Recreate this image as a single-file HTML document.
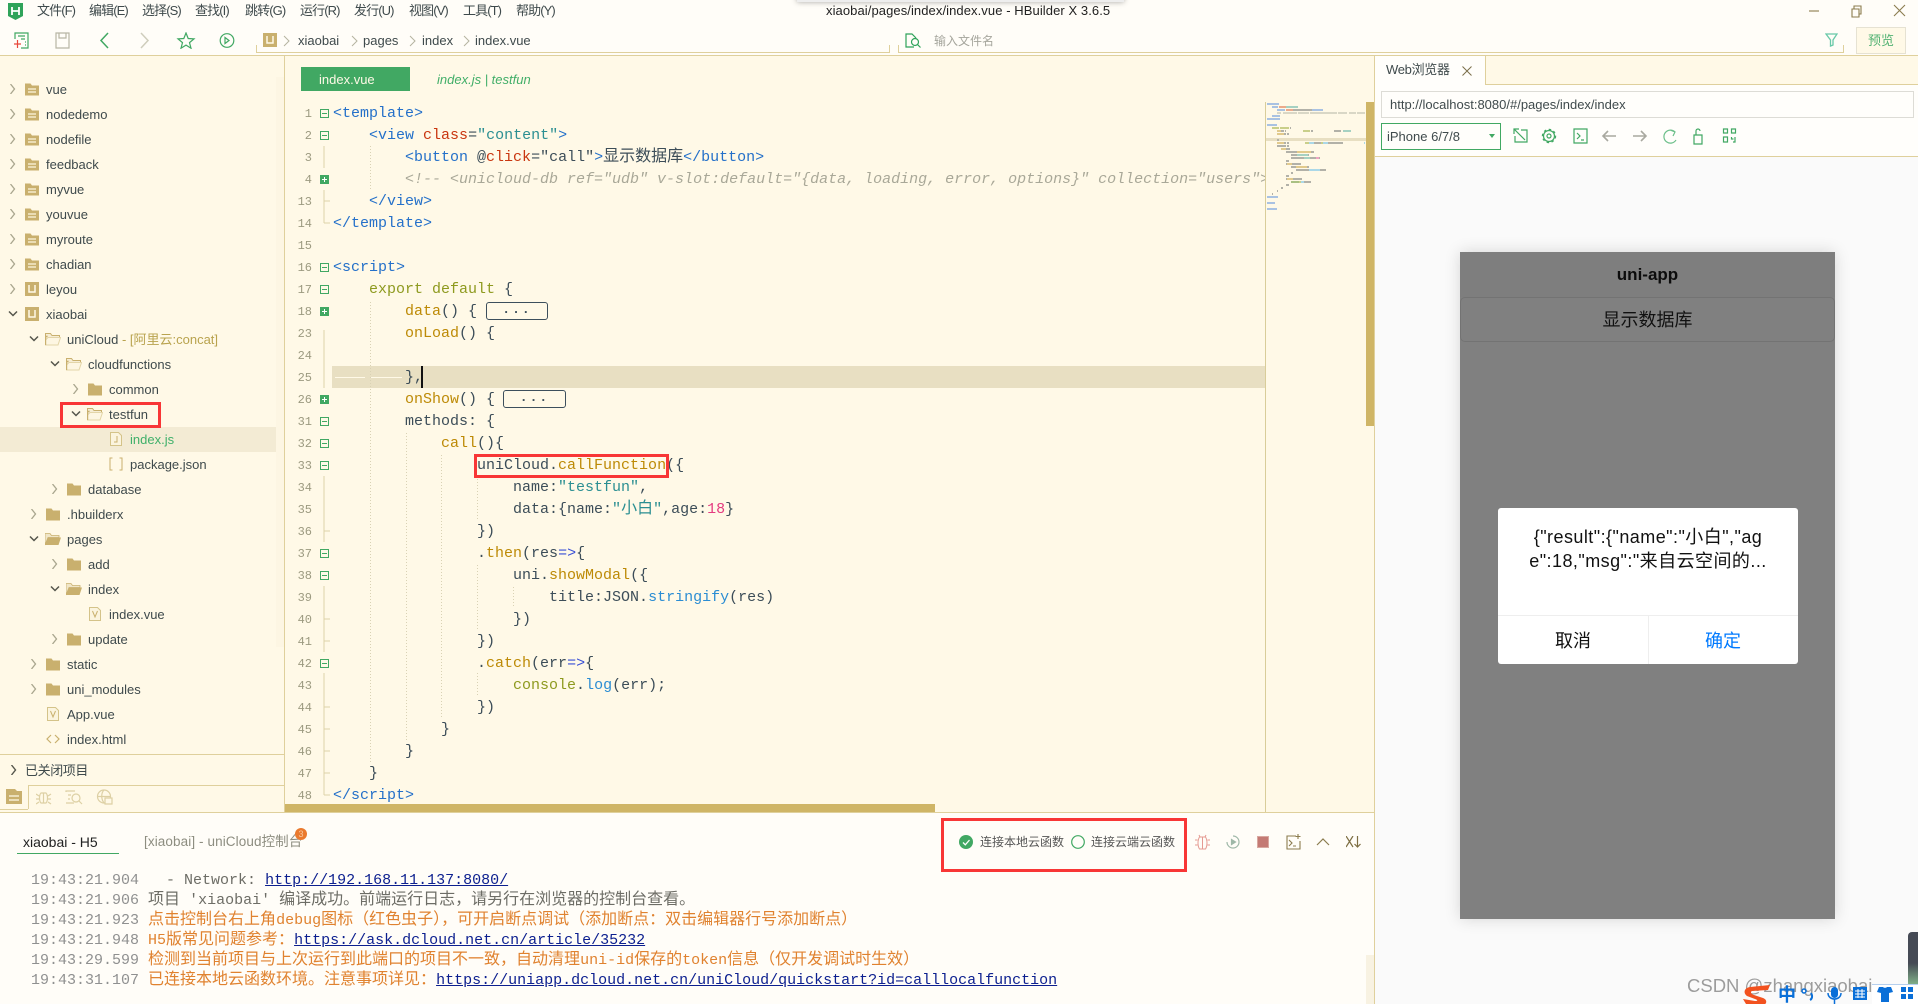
<!DOCTYPE html>
<html lang="zh"><head><meta charset="utf-8"><title>HBuilder X</title>
<style>
*{box-sizing:border-box}
html,body{margin:0;padding:0;width:1918px;height:1004px;overflow:hidden;background:#fffdf8;font:13px "Liberation Sans","Noto Sans CJK SC",sans-serif;color:#3f4a4c}
body{position:relative}
.a{position:absolute}
.tx{position:absolute;white-space:nowrap;line-height:18px}
.mn{letter-spacing:-.9px}
.bar{position:absolute;background:#dfd09c}
.r{position:absolute;left:0;width:276px;height:25px;line-height:26px;white-space:nowrap}
.r svg{position:absolute}
.r span{position:absolute;top:0}
.ch{top:7px;fill:none;stroke:#a9a68e;stroke-width:1.3}
.dn{top:8px;fill:none;stroke:#55564c;stroke-width:1.5}
.ic{top:5px}
#code{position:absolute;left:333px;top:103px;width:932px;height:704px;overflow:hidden;font:15px/22px "Liberation Mono","Noto Sans CJK SC",monospace;color:#3c4d58}
#code div{height:22px;white-space:pre}
.c{font:16px/0 "Noto Sans CJK SC",sans-serif}
.t{color:#2470c9}.at{color:#c9360f}.s{color:#2b8f92}.k{color:#8e9a1f}.f{color:#bd8a06}.cm{color:#a9a898;font-style:italic}.n{color:#e43b80}.b{color:#2b8dd3}.o{color:#3a50d6}
#nums{position:absolute;left:285px;top:103px;width:27px;text-align:right;font:12px/22px "Liberation Mono",monospace;color:#9c9a80}
#nums div{height:22px}
.fold{position:absolute;height:18px;border:1px solid #3d4f5c;border-radius:3px;font:bold 13px/13px "Liberation Mono",monospace;text-align:center;letter-spacing:2px;color:#3d4f5c}
#con{position:absolute;left:31px;top:871px;font:15px/20px "Liberation Mono","Noto Sans CJK SC",monospace;color:#6d6d66}
#con div{height:20px;white-space:pre}
#con .c{font:16px/0 "Noto Sans CJK SC",sans-serif}
.tm{color:#8f9090}.or{color:#e0822f}
#con a{color:#0c1f8f;text-decoration:underline}
.redb{position:absolute;border:3px solid #f83636}
</style></head>
<body>
<svg width="0" height="0" style="position:absolute">
<defs>
<symbol id="fp" viewBox="0 0 14 14"><path d="M0 1.5h5.500l1.500 2h7v10H0z" fill="#c9b06e"/><path d="M3 7h8M3 10h8" stroke="#fff6df" stroke-width="1.300"/></symbol>
<symbol id="fc" viewBox="0 0 14 14"><path d="M0 1.500h5.500l1.500 2h7v10H0z" fill="#c9b06e"/></symbol>
<symbol id="fo" viewBox="0 0 16 14"><path d="M.5 13V1.500h5l1.500 2h7.500V6" fill="#f6edd4" stroke="#c9b06e"/><path d="M.5 13V8L3 5.500h12.500L13 13z" fill="#fdf6e2" stroke="#e3d5a8"/><path d="M.5 13V5l2-1" fill="none" stroke="#c9b06e" stroke-width="1.400"/></symbol>
<symbol id="fl" viewBox="0 0 16 14"><path d="M0 13V1.500h5l1.500 2H14V5.500H3L0 13z" fill="#f0e6c8" stroke="#c9b06e" stroke-width=".8"/><path d="M0 13 3 5.500h13L13.500 13z" fill="#c9b06e"/></symbol>
<symbol id="u" viewBox="0 0 14 14"><rect width="14" height="14" fill="#c9b06e"/><path d="M4 3v7h6V3" fill="none" stroke="#fff9e7" stroke-width="1.500"/></symbol>
<symbol id="fv" viewBox="0 0 12 14"><path d="M.5.500h8l3 3v10H.5z" fill="#fbf4de" stroke="#d4c389"/><path d="M3.500 4l2.500 6 2.500-6" fill="none" stroke="#c9b06e"/></symbol>
<symbol id="m" viewBox="0 0 9 9"><rect x=".5" y=".5" width="8" height="8" fill="#fff9e7" stroke="#41a863"/><path d="M2 4.500h5" stroke="#41a863"/></symbol>
<symbol id="p" viewBox="0 0 9 9"><rect width="9" height="9" fill="#41a863"/><path d="M2 4.500h5M4.500 2v5" stroke="#fff"/></symbol>
</defs>
</svg>

<!-- title bar -->
<div class="a" style="left:797px;top:-8px;width:327px;height:10px;box-shadow:0 0 6px rgba(0,0,0,.35);background:#eee"></div>
<svg class="a" style="left:8px;top:3px" width="15" height="17" viewBox="0 0 15 17"><path d="M0 0h15v13l-7.500 4L0 13z" fill="#2fa35a"/><path d="M4 4v8M11 4v8M4 8h7" stroke="#fff" stroke-width="1.800" fill="none"/></svg>
<span class="tx mn" style="left:37px;top:2px">文件(F)</span><span class="tx mn" style="left:89px;top:2px">编辑(E)</span><span class="tx mn" style="left:142px;top:2px">选择(S)</span><span class="tx mn" style="left:195px;top:2px">查找(I)</span><span class="tx mn" style="left:245px;top:2px">跳转(G)</span><span class="tx mn" style="left:300px;top:2px">运行(R)</span><span class="tx mn" style="left:354px;top:2px">发行(U)</span><span class="tx mn" style="left:409px;top:2px">视图(V)</span><span class="tx mn" style="left:463px;top:2px">工具(T)</span><span class="tx mn" style="left:516px;top:2px">帮助(Y)</span>
<span class="tx" style="left:826px;top:2px;color:#222;letter-spacing:.08px">xiaobai/pages/index/index.vue - HBuilder X 3.6.5</span>
<svg class="a" style="left:1805px;top:3px" width="105" height="16" fill="none" stroke="#8b7c4e" stroke-width="1.100"><path d="M4 8h10"/><path d="M47 6h7v8h-7zM49 6V3h7v8h-2"/><path d="M89 2l11 11M100 2L89 13"/></svg>

<!-- toolbar -->
<svg class="a" style="left:14px;top:32px" width="240" height="17" fill="none" stroke-width="1.200">
<path d="M1 7V1h13v15H7" stroke="#41a863"/><path d="M4 4h7M7 7h4M11 10h1M11 13h1" stroke="#41a863"/><path d="M0 12h7M3.500 8v8" stroke="#e8473a"/>
<path d="M42 1h13v15H42zM45 1v5h7V1" stroke="#b8b6a4"/>
<path d="M94 1l-7 7.500 7 7.500" stroke="#41a863" stroke-width="1.500"/>
<path d="M127 1l7 7.500-7 7.500" stroke="#cfcdbc" stroke-width="1.500"/>
<path d="M172 1l2.200 5.500 5.800.400-4.500 3.700 1.500 5.600-5-3.100-5 3.100 1.500-5.600-4.500-3.700 5.800-.400z" stroke="#41a863"/>
<circle cx="213" cy="8.500" r="6.800" stroke="#41a863"/><path d="M211 5.500l4 3-4 3z" stroke="#41a863"/>
</svg>
<svg class="a" style="left:263px;top:33px" width="14" height="14"><use href="#u"/></svg>
<svg class="a" style="left:282px;top:35px" width="240" height="12" fill="none" stroke="#b5b3a0"><path d="M2 1l5 5-5 5M70 1l5 5-5 5M128 1l5 5-5 5M182 1l5 5-5 5"/></svg>
<span class="tx" style="left:298px;top:32px">xiaobai</span><span class="tx" style="left:363px;top:32px">pages</span><span class="tx" style="left:422px;top:32px">index</span><span class="tx" style="left:475px;top:32px">index.vue</span>
<div class="bar" style="left:256px;top:52px;width:634px;height:1px"></div>
<div class="bar" style="left:256px;top:45px;width:1px;height:8px"></div>
<div class="bar" style="left:889px;top:45px;width:1px;height:8px"></div>
<div class="bar" style="left:898px;top:52px;width:946px;height:1px"></div>
<div class="bar" style="left:898px;top:45px;width:1px;height:8px"></div>
<div class="bar" style="left:1843px;top:45px;width:1px;height:8px"></div>
<svg class="a" style="left:905px;top:33px" width="17" height="15" fill="none" stroke="#2fa35a" stroke-width="1.200"><path d="M9 14H1V1h6l4 4"/><circle cx="10" cy="9" r="3.500"/><path d="M12.500 11.500l3 3"/></svg>
<span class="tx" style="left:934px;top:32px;color:#a5a59c;font-size:12px">输入文件名</span>
<svg class="a" style="left:1825px;top:33px" width="13" height="14"><path d="M1 1h11L8 7v5L5.500 13V7z" fill="none" stroke="#68c9a8" stroke-width="1.300"/></svg>
<div class="a" style="left:1856px;top:27px;width:50px;height:27px;border:1px solid #e6e2d2;background:#fff9e7;color:#52b272;text-align:center;line-height:26px;font-size:13px">预览</div>
<div class="bar" style="left:0;top:55px;width:1918px;height:1px"></div>

<!-- sidebar -->
<div class="a" style="left:0;top:56px;width:285px;height:756px;background:#fff9e7"></div>
<div class="a" style="left:276px;top:77px;width:9px;height:570px;background:#fdf6e3"></div>
<div class="a" style="left:0;top:427px;width:276px;height:25px;background:#f3ebd4"></div>
<div class="r" style="top:77px"><svg class="ch" style="left:9px" width="8" height="10"><path d="M1.500 0l4 5-4 5"/></svg><svg class="ic" style="left:25px" width="14" height="14"><use href="#fp"/></svg><span style="left:46px">vue</span></div>
<div class="r" style="top:102px"><svg class="ch" style="left:9px" width="8" height="10"><path d="M1.500 0l4 5-4 5"/></svg><svg class="ic" style="left:25px" width="14" height="14"><use href="#fp"/></svg><span style="left:46px">nodedemo</span></div>
<div class="r" style="top:127px"><svg class="ch" style="left:9px" width="8" height="10"><path d="M1.500 0l4 5-4 5"/></svg><svg class="ic" style="left:25px" width="14" height="14"><use href="#fp"/></svg><span style="left:46px">nodefile</span></div>
<div class="r" style="top:152px"><svg class="ch" style="left:9px" width="8" height="10"><path d="M1.500 0l4 5-4 5"/></svg><svg class="ic" style="left:25px" width="14" height="14"><use href="#fp"/></svg><span style="left:46px">feedback</span></div>
<div class="r" style="top:177px"><svg class="ch" style="left:9px" width="8" height="10"><path d="M1.500 0l4 5-4 5"/></svg><svg class="ic" style="left:25px" width="14" height="14"><use href="#fp"/></svg><span style="left:46px">myvue</span></div>
<div class="r" style="top:202px"><svg class="ch" style="left:9px" width="8" height="10"><path d="M1.500 0l4 5-4 5"/></svg><svg class="ic" style="left:25px" width="14" height="14"><use href="#fp"/></svg><span style="left:46px">youvue</span></div>
<div class="r" style="top:227px"><svg class="ch" style="left:9px" width="8" height="10"><path d="M1.500 0l4 5-4 5"/></svg><svg class="ic" style="left:25px" width="14" height="14"><use href="#fp"/></svg><span style="left:46px">myroute</span></div>
<div class="r" style="top:252px"><svg class="ch" style="left:9px" width="8" height="10"><path d="M1.500 0l4 5-4 5"/></svg><svg class="ic" style="left:25px" width="14" height="14"><use href="#fp"/></svg><span style="left:46px">chadian</span></div>
<div class="r" style="top:277px"><svg class="ch" style="left:9px" width="8" height="10"><path d="M1.500 0l4 5-4 5"/></svg><svg class="ic" style="left:25px" width="14" height="14"><use href="#u"/></svg><span style="left:46px">leyou</span></div>
<div class="r" style="top:302px"><svg class="dn" style="left:8px" width="10" height="8"><path d="M1 1.500l4 4 4-4"/></svg><svg class="ic" style="left:25px" width="14" height="14"><use href="#u"/></svg><span style="left:46px">xiaobai</span></div>
<div class="r" style="top:327px"><svg class="dn" style="left:29px" width="10" height="8"><path d="M1 1.500l4 4 4-4"/></svg><svg class="ic" style="left:45px" width="16" height="14"><use href="#fo"/></svg><span style="left:67px">uniCloud<b style="font-weight:400;color:#b9a34e"> - [阿里云:concat]</b></span></div>
<div class="r" style="top:352px"><svg class="dn" style="left:50px" width="10" height="8"><path d="M1 1.500l4 4 4-4"/></svg><svg class="ic" style="left:66px" width="16" height="14"><use href="#fo"/></svg><span style="left:88px">cloudfunctions</span></div>
<div class="r" style="top:377px"><svg class="ch" style="left:72px" width="8" height="10"><path d="M1.500 0l4 5-4 5"/></svg><svg class="ic" style="left:88px" width="14" height="14"><use href="#fc"/></svg><span style="left:109px">common</span></div>
<div class="r" style="top:402px"><svg class="dn" style="left:71px" width="10" height="8"><path d="M1 1.500l4 4 4-4"/></svg><svg class="ic" style="left:87px" width="16" height="14"><use href="#fo"/></svg><span style="left:109px">testfun</span></div>
<div class="r" style="top:427px"><svg class="ic" style="left:110px" width="12" height="14"><path d="M.5.500h8l3 3v10H.5z" fill="#fbf4de" stroke="#d4c389"/><path d="M7 4v6H4" fill="none" stroke="#c9b06e"/></svg><span style="left:130px;color:#3fb06a">index.js</span></div>
<div class="r" style="top:452px"><svg class="ic" style="left:109px" width="14" height="14" fill="none" stroke="#c9b06e"><path d="M3.500 1H1v12h2.500M10.500 1H13v12h-2.500"/></svg><span style="left:130px">package.json</span></div>
<div class="r" style="top:477px"><svg class="ch" style="left:51px" width="8" height="10"><path d="M1.500 0l4 5-4 5"/></svg><svg class="ic" style="left:67px" width="14" height="14"><use href="#fc"/></svg><span style="left:88px">database</span></div>
<div class="r" style="top:502px"><svg class="ch" style="left:30px" width="8" height="10"><path d="M1.500 0l4 5-4 5"/></svg><svg class="ic" style="left:46px" width="14" height="14"><use href="#fc"/></svg><span style="left:67px">.hbuilderx</span></div>
<div class="r" style="top:527px"><svg class="dn" style="left:29px" width="10" height="8"><path d="M1 1.500l4 4 4-4"/></svg><svg class="ic" style="left:45px" width="16" height="14"><use href="#fl"/></svg><span style="left:67px">pages</span></div>
<div class="r" style="top:552px"><svg class="ch" style="left:51px" width="8" height="10"><path d="M1.500 0l4 5-4 5"/></svg><svg class="ic" style="left:67px" width="14" height="14"><use href="#fc"/></svg><span style="left:88px">add</span></div>
<div class="r" style="top:577px"><svg class="dn" style="left:50px" width="10" height="8"><path d="M1 1.500l4 4 4-4"/></svg><svg class="ic" style="left:66px" width="16" height="14"><use href="#fl"/></svg><span style="left:88px">index</span></div>
<div class="r" style="top:602px"><svg class="ic" style="left:89px" width="12" height="14"><use href="#fv"/></svg><span style="left:109px">index.vue</span></div>
<div class="r" style="top:627px"><svg class="ch" style="left:51px" width="8" height="10"><path d="M1.500 0l4 5-4 5"/></svg><svg class="ic" style="left:67px" width="14" height="14"><use href="#fc"/></svg><span style="left:88px">update</span></div>
<div class="r" style="top:652px"><svg class="ch" style="left:30px" width="8" height="10"><path d="M1.500 0l4 5-4 5"/></svg><svg class="ic" style="left:46px" width="14" height="14"><use href="#fc"/></svg><span style="left:67px">static</span></div>
<div class="r" style="top:677px"><svg class="ch" style="left:30px" width="8" height="10"><path d="M1.500 0l4 5-4 5"/></svg><svg class="ic" style="left:46px" width="14" height="14"><use href="#fc"/></svg><span style="left:67px">uni_modules</span></div>
<div class="r" style="top:702px"><svg class="ic" style="left:47px" width="12" height="14"><use href="#fv"/></svg><span style="left:67px">App.vue</span></div>
<div class="r" style="top:727px"><svg class="ic" style="left:46px" width="14" height="14" fill="none" stroke="#c9b06e" stroke-width="1.200"><path d="M5 3L1 7l4 4M9 3l4 4-4 4"/></svg><span style="left:67px">index.html</span></div>
<div class="bar" style="left:0;top:754px;width:285px;height:1px"></div>
<svg class="a" style="left:10px;top:765px" width="8" height="10" fill="none" stroke="#55564c" stroke-width="1.400"><path d="M1.500 0l4 5-4 5"/></svg>
<span class="tx" style="left:25px;top:762px;letter-spacing:-.4px">已关闭项目</span>
<div class="bar" style="left:29px;top:785px;width:256px;height:1px"></div>
<div class="bar" style="left:28px;top:785px;width:1px;height:24px"></div>
<div class="bar" style="left:0;top:809px;width:28px;height:1px"></div>
<svg class="a" style="left:6px;top:789px" width="16" height="15"><path d="M0 0h9l2 2h5v13H0z" fill="#c9b06e"/><path d="M3 7h10M3 11h10" stroke="#fff9e7" stroke-width="1.300"/></svg>
<svg class="a" style="left:36px;top:789px" width="80" height="16" fill="none" stroke="#ddd0a4" stroke-width="1.200"><path d="M5 4h5c2 2 2 8 0 10H5c-2-2-2-8 0-10zM7.500 4v10M0 5l3 2M15 5l-3 2M0 10h3M15 10h-3M0 15l3-2M15 15l-3-2"/><path d="M39 2h-9v1M32 6h3M32 10h2M30 14h8"/><circle cx="40" cy="9" r="4"/><path d="M43 12l3 3"/><circle cx="68" cy="7.500" r="6.500"/><path d="M68 1c-3 3-3 9 0 13M62 7.500h12"/><path d="M69 9h7v6h-7z" fill="#fff9e7"/></svg>

<!-- editor -->
<div class="a" style="left:284px;top:55px;width:1px;height:757px;background:#dfd09c"></div>
<div class="a" style="left:285px;top:56px;width:1089px;height:756px;background:#fff9e7"></div>
<div class="a" style="left:301px;top:67px;width:109px;height:24px;background:#41a863;color:#fdf8e6;line-height:25px;padding-left:18px">index.vue</div>
<span class="tx" style="left:437px;top:71px;color:#41ae68;font-style:italic">index.js | testfun</span>
<div class="a" style="left:332px;top:366px;width:933px;height:22px;background:#e8dfc2"></div>
<div class="a" style="left:335px;top:377px;width:30px;height:1px;background:#fff9e7"></div>
<div class="a" style="left:371px;top:377px;width:31px;height:1px;background:#fff9e7"></div>

<svg class="a" style="left:0;top:0" width="1918" height="1004" fill="none">
<g stroke="#ddd2a8">
<path d="M324 146V168M324 190V223M324 201h6M324 223h6M324 330V388M324 476V542M324 531h6M324 586V652M324 619h6M324 641h6M324 673V795M324 707h6M324 729h6M324 751h6M324 773h6M324 795h6"/>
</g>
<g stroke="#d9d2b4" stroke-dasharray="1 2">
<path d="M370.500 146V190M370.500 302V762M406.500 433V740M441.500 455V718M477.500 476V520M477.500 565V630M477.500 673V695M513.500 587V607"/>
</g>
<use href="#m" x="320" y="109" width="9" height="9"/><use href="#m" x="320" y="131" width="9" height="9"/><use href="#m" x="320" y="263" width="9" height="9"/><use href="#m" x="320" y="285" width="9" height="9"/><use href="#m" x="320" y="417" width="9" height="9"/><use href="#m" x="320" y="439" width="9" height="9"/><use href="#m" x="320" y="461" width="9" height="9"/><use href="#m" x="320" y="549" width="9" height="9"/><use href="#m" x="320" y="571" width="9" height="9"/><use href="#m" x="320" y="659" width="9" height="9"/>
<use href="#p" x="320" y="175" width="9" height="9"/><use href="#p" x="320" y="307" width="9" height="9"/><use href="#p" x="320" y="395" width="9" height="9"/>
</svg>

<div id="nums"><div>1</div><div>2</div><div>3</div><div>4</div><div>13</div><div>14</div><div>15</div><div>16</div><div>17</div><div>18</div><div>23</div><div>24</div><div>25</div><div>26</div><div>31</div><div>32</div><div>33</div><div>34</div><div>35</div><div>36</div><div>37</div><div>38</div><div>39</div><div>40</div><div>41</div><div>42</div><div>43</div><div>44</div><div>45</div><div>46</div><div>47</div><div>48</div></div>

<div id="code">
<div><span class="t">&lt;template&gt;</span></div>
<div>    <span class="t">&lt;view</span> <span class="at">class</span>=<span class="s">"content"</span><span class="t">&gt;</span></div>
<div>        <span class="t">&lt;button</span> @<span class="at">click</span>="call"<span class="t">&gt;</span><span class="c">显示数据库</span><span class="t">&lt;/button&gt;</span></div>
<div>        <span class="cm">&lt;!-- &lt;unicloud-db ref="udb" v-slot:default="{data, loading, error, options}" collection="users"&gt;</span></div>
<div>    <span class="t">&lt;/view&gt;</span></div>
<div><span class="t">&lt;/template&gt;</span></div>
<div> </div>
<div><span class="t">&lt;script&gt;</span></div>
<div>    <span class="k">export default</span> {</div>
<div>        <span class="f">data</span>() {</div>
<div>        <span class="f">onLoad</span>() {</div>
<div> </div>
<div>        },</div>
<div>        <span class="f">onShow</span>() {</div>
<div>        methods: {</div>
<div>            <span class="f">call</span>(){</div>
<div>                uniCloud.<span class="f">callFunction</span>({</div>
<div>                    name:<span class="s">"testfun"</span>,</div>
<div>                    data:{name:<span class="s">"<span class="c">小白</span>"</span>,age:<span class="n">18</span>}</div>
<div>                })</div>
<div>                .<span class="f">then</span>(res<span class="o">=&gt;</span>{</div>
<div>                    uni.<span class="f">showModal</span>({</div>
<div>                        title:JSON.<span class="b">stringify</span>(res)</div>
<div>                    })</div>
<div>                })</div>
<div>                .<span class="f">catch</span>(err<span class="o">=&gt;</span>{</div>
<div>                    <span class="k">console</span>.<span class="b">log</span>(err);</div>
<div>                })</div>
<div>            }</div>
<div>        }</div>
<div>    }</div>
<div><span class="t">&lt;/script&gt;</span></div>
</div>
<div class="fold" style="left:486px;top:302px;width:62px">...</div>
<div class="fold" style="left:503px;top:390px;width:63px">...</div>
<div class="a" style="left:421px;top:366px;width:2px;height:22px;background:#111"></div>
<div class="redb" style="left:60px;top:402px;width:101px;height:26px"></div>
<div class="redb" style="left:474px;top:454px;width:195px;height:24px"></div>

<!-- minimap -->
<div class="a" style="left:1265px;top:102px;width:1px;height:710px;background:#d9cd99"></div>
<svg class="a" style="left:1262px;top:95px" width="115" height="125" viewBox="0 0 345 375">
<rect x="12" y="129" width="300" height="9" fill="#e8dfc2"/>
<g fill="#a9c2e2"><rect x="15" y="24" width="36" height="6"/><rect x="30" y="33" width="18" height="6"/><rect x="45" y="42" width="24" height="6"/><rect x="150" y="42" width="33" height="6"/><rect x="30" y="60" width="24" height="6"/><rect x="15" y="69" width="39" height="6"/><rect x="15" y="87" width="30" height="6"/><rect x="15" y="303" width="33" height="6"/><rect x="15" y="321" width="24" height="6"/><rect x="15" y="339" width="30" height="6"/></g>
<g fill="#eda98a"><rect x="51" y="33" width="21" height="6"/><rect x="72" y="42" width="21" height="6"/></g>
<g fill="#a6d1c2"><rect x="72" y="33" width="36" height="6"/><rect x="243" y="105" width="24" height="6"/><rect x="105" y="177" width="33" height="6"/><rect x="126" y="186" width="18" height="6"/></g>
<g fill="#d9d7c6"><rect x="45" y="51" width="12" height="6"/><rect x="63" y="51" width="42" height="6"/><rect x="108" y="51" width="33" height="6"/><rect x="144" y="51" width="81" height="6"/><rect x="228" y="51" width="27" height="6"/><rect x="261" y="51" width="21" height="6"/><rect x="285" y="51" width="24" height="6"/></g>
<g fill="#c9cf8a"><rect x="30" y="96" width="21" height="6"/><rect x="54" y="96" width="27" height="6"/><rect x="123" y="105" width="21" height="6"/><rect x="129" y="141" width="12" height="6"/><rect x="177" y="141" width="6" height="6"/><rect x="111" y="258" width="6" height="6"/></g>
<g fill="#b2b1a8"><rect x="93" y="42" width="27" height="6"/><rect x="120" y="42" width="30" height="6"/><rect x="84" y="96" width="3" height="6"/><rect x="57" y="105" width="9" height="6"/><rect x="69" y="105" width="3" height="6"/><rect x="147" y="105" width="6" height="6"/><rect x="216" y="105" width="21" height="6"/><rect x="66" y="114" width="6" height="6"/><rect x="75" y="114" width="6" height="6"/><rect x="45" y="132" width="6" height="6"/><rect x="66" y="141" width="6" height="6"/><rect x="75" y="141" width="6" height="6"/><rect x="156" y="141" width="21" height="6"/><rect x="198" y="141" width="45" height="6"/><rect x="45" y="150" width="27" height="6"/><rect x="75" y="150" width="6" height="6"/><rect x="72" y="159" width="12" height="6"/><rect x="72" y="168" width="33" height="6"/><rect x="147" y="168" width="9" height="6"/><rect x="87" y="177" width="18" height="6"/><rect x="138" y="177" width="3" height="6"/><rect x="87" y="186" width="39" height="6"/><rect x="144" y="186" width="18" height="6"/><rect x="171" y="186" width="3" height="6"/><rect x="72" y="195" width="9" height="6"/><rect x="72" y="204" width="3" height="6"/><rect x="90" y="204" width="18" height="6"/><rect x="108" y="204" width="9" height="6"/><rect x="87" y="213" width="15" height="6"/><rect x="135" y="213" width="6" height="6"/><rect x="102" y="222" width="39" height="6"/><rect x="174" y="222" width="18" height="6"/><rect x="87" y="231" width="6" height="6"/><rect x="72" y="240" width="9" height="6"/><rect x="72" y="249" width="3" height="6"/><rect x="93" y="249" width="27" height="6"/><rect x="126" y="258" width="21" height="6"/><rect x="72" y="267" width="9" height="6"/><rect x="57" y="276" width="6" height="6"/><rect x="45" y="285" width="3" height="6"/><rect x="30" y="294" width="3" height="6"/></g>
<g fill="#e2ca8c"><rect x="45" y="105" width="12" height="6"/><rect x="45" y="114" width="21" height="6"/><rect x="45" y="141" width="21" height="6"/><rect x="57" y="159" width="15" height="6"/><rect x="105" y="168" width="42" height="6"/><rect x="75" y="204" width="15" height="6"/><rect x="102" y="213" width="33" height="6"/><rect x="75" y="249" width="18" height="6"/></g>
<g fill="#abd8e8"><rect x="141" y="141" width="15" height="6"/><rect x="183" y="141" width="15" height="6"/><rect x="306" y="141" width="3" height="6"/><rect x="141" y="222" width="33" height="6"/><rect x="117" y="258" width="9" height="6"/></g>
<rect x="162" y="186" width="9" height="6" fill="#f0a3c2"/><rect x="87" y="258" width="24" height="6" fill="#a9c082"/>
</svg>
<div class="a" style="left:1366px;top:102px;width:8px;height:324px;background:#cfb566"></div>
<div class="a" style="left:285px;top:804px;width:650px;height:8px;background:#cfb566"></div>
<div class="a" style="left:1374px;top:55px;width:1px;height:949px;background:#dfd09c"></div>
<div class="bar" style="left:0;top:812px;width:1374px;height:1px"></div>

<!-- right panel -->
<div class="a" style="left:1375px;top:56px;width:543px;height:948px;background:#fafafa"></div>
<div class="a" style="left:1375px;top:56px;width:543px;height:100px;background:#fffefb"></div>
<div class="a" style="left:1485px;top:56px;width:433px;height:29px;background:#fff9e7;border-bottom:1px solid #dfd09c;border-left:1px solid #dfd09c"></div>
<span class="tx" style="left:1386px;top:61px;letter-spacing:-.3px">Web浏览器</span>
<svg class="a" style="left:1462px;top:66px" width="10" height="10" fill="none" stroke="#7a6e4a"><path d="M.5.500l9 9M9.500.500l-9 9"/></svg>
<div class="a" style="left:1381px;top:91px;width:533px;height:27px;border:1px solid #dddcd6;line-height:26px;padding-left:8px;white-space:nowrap">http://localhost:8080/#/pages/index/index</div>
<div class="a" style="left:1381px;top:123px;width:120px;height:27px;border:1px solid #41a863;line-height:25px;padding-left:5px">iPhone 6/7/8</div>
<svg class="a" style="left:1489px;top:134px" width="6" height="5"><path d="M0 0h6L3 4z" fill="#41a863"/></svg>
<svg class="a" style="left:1512px;top:127px" width="226" height="18" fill="none" stroke="#41a863" stroke-width="1.200">
<path d="M2 7V2h5M9 3h6v12H3V9M2 2l11 11"/>
<circle cx="37" cy="9" r="5.500"/><circle cx="37" cy="9" r="6.600" stroke-dasharray="2.500 2.600" stroke-width="1.200"/><circle cx="37" cy="9" r="2"/>
<path d="M62 2h13v14H62zM65 6l3 3-3 3M69 13h3"/>
<g stroke="#a9a9a0" stroke-width="1.600"><path d="M104 9H91M96 4l-5 5 5 5M121 9h13M129 4l5 5-5 5"/></g>
<path d="M163 5a6.500 6.500 0 1 0 1 8M158 3l5 2-2 4" stroke="#6cbf8a"/>
<path d="M182 8h8v9h-8zM184 8V4a2 2 0 0 1 4 0"/>
<path d="M211.500 2h4v4h-4zM219.500 2h4v4h-4zM211.500 10h4v5h-4zM219.500 10v2h2M223 10v5h-2"/>
</svg>
<div class="bar" style="left:1375px;top:156px;width:543px;height:1px"></div>

<div class="a" style="left:1460px;top:252px;width:375px;height:667px;background:#808080;box-shadow:0 0 15px rgba(0,0,0,.15)"></div>
<div class="a" style="left:1460px;top:252px;width:375px;height:45px;background:#7e7e7e;font-weight:bold;font-size:17px;color:#0c0c0c;text-align:center;line-height:45px">uni-app</div>
<div class="a" style="left:1460px;top:297px;width:375px;height:45px;border:1px solid rgba(0,0,0,.1);border-radius:5px;font-size:18px;color:#111;text-align:center;line-height:45px">显示数据库</div>
<div class="a" style="left:1498px;top:508px;width:300px;height:156px;background:#fff;border-radius:3px;color:#111;font-size:18px">
<div class="a" style="left:0;top:17px;width:300px;text-align:center;line-height:24px;white-space:nowrap;letter-spacing:.45px">{"result":{"name":"小白","ag<br>e":18,"msg":"来自云空间的...</div>
<div class="a" style="left:0;top:107px;width:300px;height:1px;background:#eeeeee"></div>
<div class="a" style="left:150px;top:107px;width:1px;height:49px;background:#eeeeee"></div>
<div class="a" style="left:0;top:108px;width:150px;height:48px;text-align:center;line-height:50px">取消</div>
<div class="a" style="left:150px;top:108px;width:150px;height:48px;text-align:center;line-height:50px;color:#007aff">确定</div>
</div>

<!-- watermark and IME tray -->
<div class="a" style="left:1872px;top:984px;width:46px;height:20px;background:#fff;border-top:1px solid #b5cfee"></div>
<div class="a" style="left:1908px;top:932px;width:10px;height:52px;background:linear-gradient(#454a55 60%,#7fae88);border-radius:4px 0 0 0"></div>
<div class="tx" style="left:1687px;top:974px;font-size:18.500px;line-height:24px;color:#9c9c9c">CSDN @zhangxiaobai</div>
<svg class="a" style="left:1742px;top:985px" width="176" height="19">
<path d="M8 2l20-2-2 5-16 1c-2 1-1 3 2 4l9 3c5 2 3 6 2 6H4L1 14l12 2c3 0 3-1 0-2L5 11C1 8 2 3 8 2z" fill="#f2521f"/>
<text x="36" y="16" font-size="18" font-weight="bold" fill="#0a6fd8" font-family="Noto Sans CJK SC,sans-serif">中</text>
<circle cx="62" cy="6" r="2" fill="none" stroke="#0a6fd8" stroke-width="1.500"/><path d="M69 8c2 3 1 6-1 7" stroke="#0a6fd8" stroke-width="2" fill="none"/>
<rect x="89" y="2" width="7" height="11" rx="3.500" fill="#0a6fd8"/><path d="M86 8c0 8 13 8 13 0M92.500 14v5" stroke="#0a6fd8" stroke-width="1.500" fill="none"/>
<rect x="111" y="2" width="14" height="13" fill="#0a6fd8"/><path d="M113 6h10M113 9h10M113 12h10M116 4v9M120 4v9" stroke="#fff"/>
<path d="M137 2h4c1 1 3 1 4 0h4l2 5-4 1v9h-8V8l-4-1z" fill="#0a6fd8"/>
<path d="M159 2h5v5h-5zM166 2h5v5h-5zM159 9h5v5h-5zM166 9h5v5h-5z" fill="#0a6fd8"/>
</svg>

<!-- console panel -->
<span class="tx" style="left:23px;top:833px;font-size:14px;color:#222">xiaobai - H5</span>
<div class="a" style="left:17px;top:853px;width:102px;height:1px;background:#41a863"></div>
<span class="tx" style="left:144px;top:833px;font-size:13.500px;letter-spacing:.1px;color:#8d8d80">[xiaobai] - uniCloud控制台</span>
<div class="a" style="left:295px;top:828px;width:12px;height:12px;border-radius:50%;background:#ea7a2e;color:#f7c8a0;font-size:9px;line-height:12px;text-align:center">3</div>
<div class="redb" style="left:941px;top:818px;width:246px;height:54px"></div>
<svg class="a" style="left:959px;top:835px" width="14" height="14"><circle cx="7" cy="7" r="7" fill="#41a863"/><path d="M4 7.500l2.300 2.300L10.500 5" fill="none" stroke="#fff" stroke-width="1.300"/></svg>
<span class="tx" style="left:980px;top:833px;font-size:12px;color:#555">连接本地云函数</span>
<svg class="a" style="left:1071px;top:835px" width="14" height="14"><circle cx="7" cy="7" r="6.300" fill="none" stroke="#41a863" stroke-width="1.200"/></svg>
<span class="tx" style="left:1091px;top:833px;font-size:12px;color:#555">连接云端云函数</span>
<svg class="a" style="left:1195px;top:834px" width="15" height="16" fill="none" stroke="#e59a92"><path d="M4.500 3h6c2 3 2 9 0 12h-6c-2-3-2-9 0-12zM7.500 3v12M5 3l-1-2M10 3l1-2M0 6h2.500M15 6h-2.500M0 11h2.500M15 11h-2.500"/></svg>
<svg class="a" style="left:1226px;top:835px" width="14" height="14" fill="none" stroke="#9fb8a8" stroke-width="1.200"><path d="M7 1a6 6 0 1 1-6 6"/><path d="M5.500 4.500l4 2.500-4 2.500z" fill="#9fb8a8"/></svg>
<div class="a" style="left:1257px;top:836px;width:12px;height:12px;background:#c47a74;border:1px solid #d8a8a0"></div>
<svg class="a" style="left:1286px;top:834px" width="15" height="16" fill="none" stroke="#8b7c4e" stroke-width="1.100"><path d="M10 2H1v13h13V7M3 6l3 3-3 3M7 12h3M12 0v5M9.500 2.500h5"/></svg>
<svg class="a" style="left:1316px;top:838px" width="14" height="8" fill="none" stroke="#8b7c4e" stroke-width="1.200"><path d="M1 7l6-6 6 6"/></svg>
<svg class="a" style="left:1346px;top:836px" width="15" height="12" fill="none" stroke="#7d6e42" stroke-width="1.200"><path d="M0 0l7 11M7 0L0 11M11.500 0v11M8.500 8l3 3 3-3"/></svg>
<div class="a" style="left:1366px;top:955px;width:8px;height:49px;background:#f8f2e2"></div>

<div id="con">
<div><span class="tm">19:43:21.904</span>   - Network: <a>http://192.168.11.137:8080/</a></div>
<div><span class="tm">19:43:21.906</span> <span class="c">项目</span> 'xiaobai' <span class="c">编译成功。前端运行日志，请另行在浏览器的控制台查看。</span></div>
<div class="or"><span class="tm">19:43:21.923</span> <span class="c">点击控制台右上角</span>debug<span class="c">图标（红色虫子），可开启断点调试（添加断点：双击编辑器行号添加断点）</span></div>
<div class="or"><span class="tm">19:43:21.948</span> H5<span class="c">版常见问题参考：</span><a>https://ask.dcloud.net.cn/article/35232</a></div>
<div class="or"><span class="tm">19:43:29.599</span> <span class="c">检测到当前项目与上次运行到此端口的项目不一致，自动清理</span>uni-id<span class="c">保存的</span>token<span class="c">信息（仅开发调试时生效）</span></div>
<div class="or"><span class="tm">19:43:31.107</span> <span class="c">已连接本地云函数环境。注意事项详见：</span><a>https://uniapp.dcloud.net.cn/uniCloud/quickstart?id=calllocalfunction</a></div>
</div>
</body></html>
